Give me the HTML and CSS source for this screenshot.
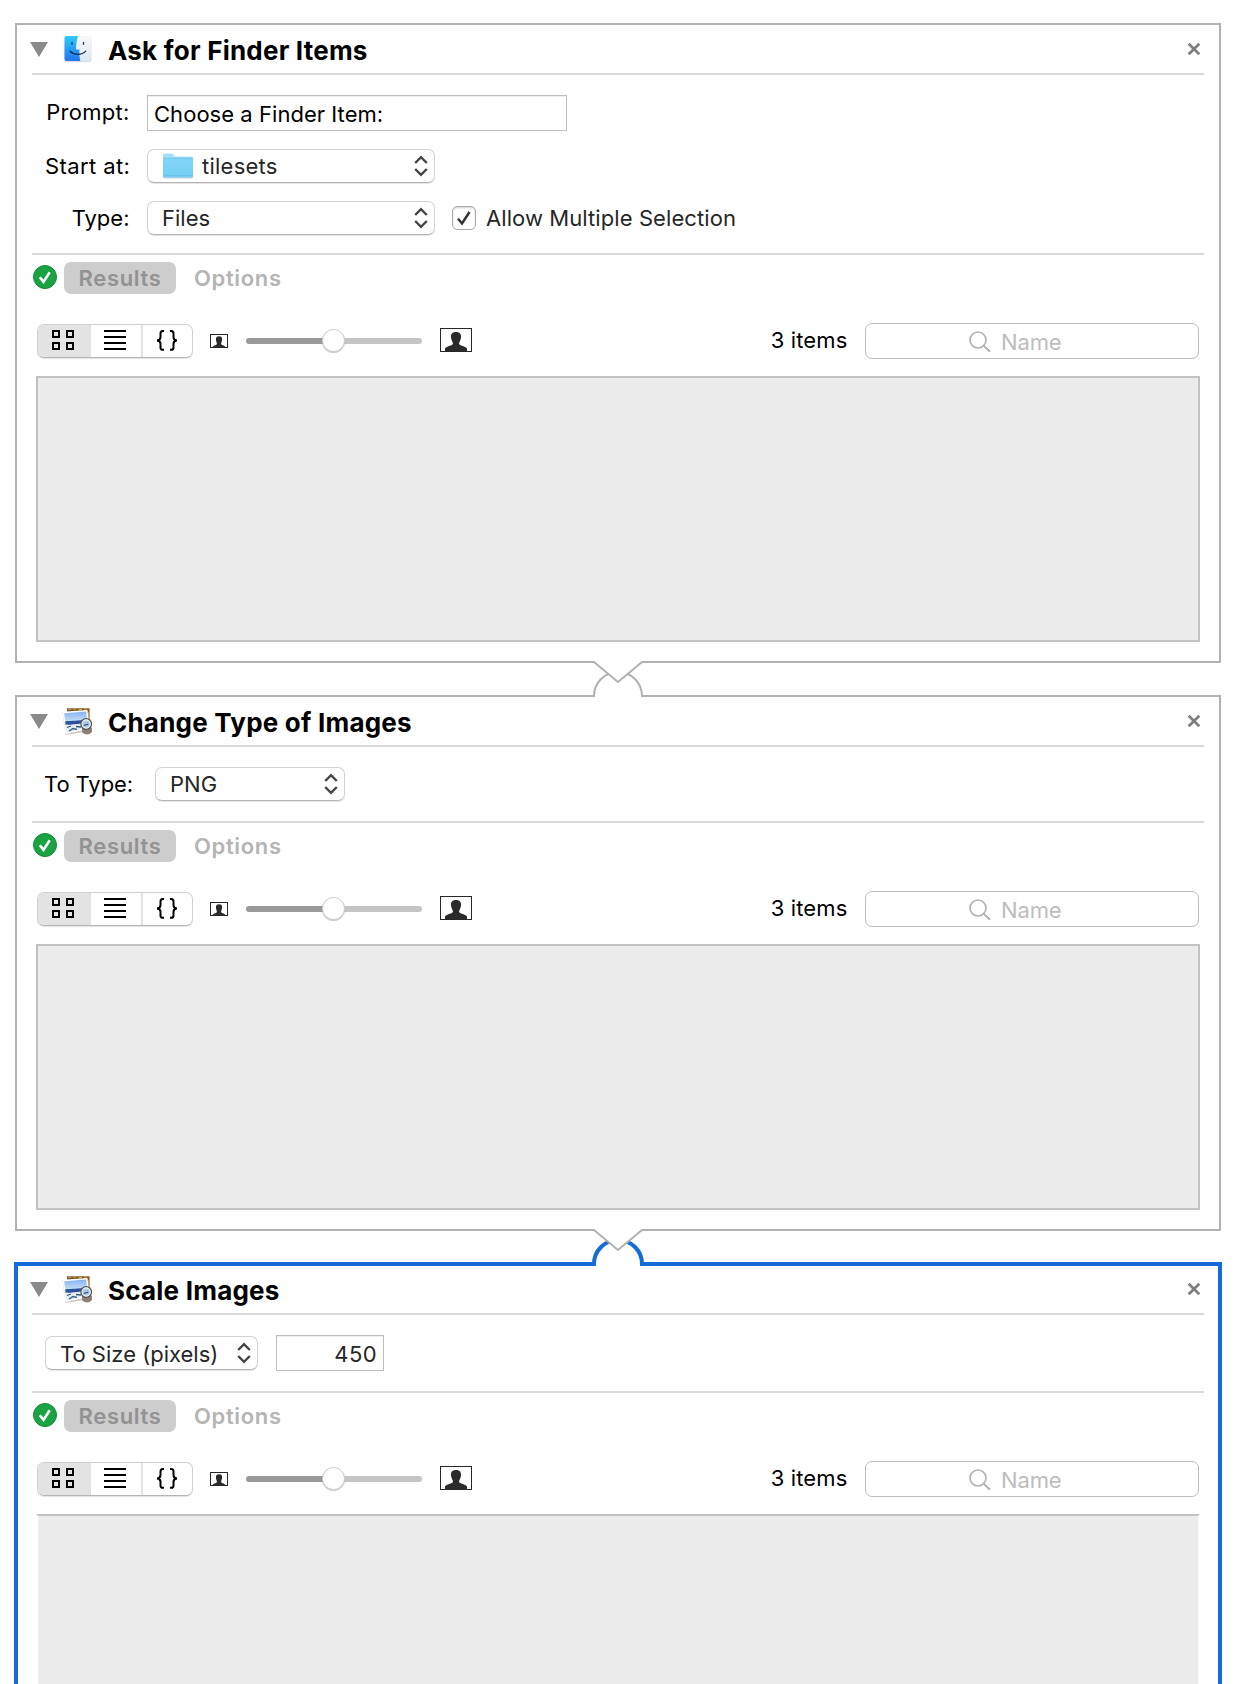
FILE: index.html
```
<!DOCTYPE html>
<html lang="en">
<head>
<meta charset="utf-8">
<title>Workflow</title>
<link rel="stylesheet" href="styles.css">
</head>
<body>
<svg class="defs" width="0" height="0" aria-hidden="true">
  <defs>
    <linearGradient id="blue" x1="0" y1="0" x2="0" y2="1"><stop offset="0" stop-color="#2bcbfb"/><stop offset="1" stop-color="#2374f0"/></linearGradient>
    <linearGradient id="pale" x1="0" y1="0" x2="0" y2="1"><stop offset="0" stop-color="#f8f8f9"/><stop offset="1" stop-color="#dce8f4"/></linearGradient>
    <linearGradient id="sky" x1="0" y1="0" x2="0" y2="1"><stop offset="0" stop-color="#86b4f0"/><stop offset=".5" stop-color="#c6dffa"/></linearGradient>
    <linearGradient id="fold" x1="0" y1="0" x2="0" y2="1"><stop offset="0" stop-color="#83d6f9"/><stop offset="1" stop-color="#74cdf3"/></linearGradient>
  </defs>
  <symbol id="finder" viewBox="-1 0 32 30">
    <rect x="1.500" y="2.800" width="27" height="25.500" rx="2" fill="#000" opacity=".13"/>
    <rect x="1.500" y="2" width="26.500" height="25" rx="2" fill="url(#pale)"/>
    <path d="M3.500 2H15c-1.400 4.500-2 8.500-2 13.500h3.400c-.1 4.500.1 8 .9 11.500H3.500a2 2 0 0 1-2-2V4a2 2 0 0 1 2-2z" fill="url(#blue)"/>
    <path d="M9 8v2.800M20.500 8v2.800" stroke="#16324d" stroke-width="1.200"/>
    <path d="M7 17.200c4.300 4.200 11.800 4.200 15.800 0" fill="none" stroke="#16324d" stroke-width="1.200" stroke-linecap="round"/>
  </symbol>
  <symbol id="preview" viewBox="0 0 32 30">
    <path d="M4 2h24.500v20H4z" fill="#000" opacity=".15"/>
    <path d="M4 1.200h24.500v20H4z" fill="#fbfbfb"/><path d="M5 2.300h22.500v17H5z" fill="#835625"/>
    <path d="M6 3.300h3M11 3h3M17 3.500h3M22 3h3M26.700 6v8" stroke="#caa25c" stroke-width="1"/>
    <path d="M.5 6l24.500-1 2.500 20-24 4z" fill="#555" opacity=".35"/>
    <path d="M.5 5.800L25.500 4l2 19-24 5z" fill="#fff"/>
    <path d="M2.200 7.200l22-1.800 1.700 16-21.200 4.800z" fill="url(#sky)"/>
    <path d="M3.200 15.300q9-.3 21.900-1.800l.5 3.500L3.800 19.500z" fill="#2b519c"/>
    <path d="M3.900 18.500q8 1 22-2.500v5.400L4.700 26.200z" fill="#e5edef"/>
    <path d="M5 21.500l4-1.500M7 25l4-2.500 4 .8M14 20.500l5 .5" fill="none" stroke="#315d86" stroke-width="1.300"/>
    <path d="M20 21.500h10v4c-1.500 3.800-8 4-10 .5z" fill="#8d8073"/>
    <circle cx="24.200" cy="18" r="5.200" fill="#a9c9e8" stroke="#55514e" stroke-width="1.500"/>
    <circle cx="24.200" cy="18" r="4.100" fill="none" stroke="#f4f4f4" stroke-width="1.100"/>
    <path d="M21.800 19.300l4.500-1.200" fill="none" stroke="#315b89" stroke-width="1.200"/>
  </symbol>
  <symbol id="person" viewBox="0 0 32 24">
    <rect x=".5" y=".5" width="31" height="23" fill="#fff" stroke="#262626"/>
    <path d="M5 23v-2.500c1-2 6-2.600 7.500-4 .8-1 .3-2-.5-3.500l-1-3c-.4-4 1.300-6 5-6s5.400 2 5 6l-1 3c-.8 1.500-1.300 2.500-.5 3.500 1.500 1.400 6.500 2 7.500 4V23z" fill="#2b2b2b"/>
  </symbol>
  <symbol id="person-small" viewBox="0 0 18 14">
    <rect x=".5" y=".5" width="17" height="13" fill="#fff" stroke="#262626"/>
    <path d="M2.500 13.500c0-2 3.500-2 4.500-3.500L6 6.500C5.500 3.500 6.500 2.300 9 2.300s3.500 1.200 3 4.200L11 10c1 1.500 4.500 1.500 4.500 3.500z" fill="#2b2b2b"/>
  </symbol>
  <symbol id="check" viewBox="0 0 24 24">
    <circle cx="12" cy="12" r="11.500" fill="#1aa342" stroke="#178a39"/>
    <path d="M6.800 12.300l3.700 4.600 6.200-9.600" fill="none" stroke="#fff" stroke-width="2.600"/>
  </symbol>
  <symbol id="arrows" viewBox="0 0 14 22"><path d="M1.200 8L7 2.200 12.800 8M1.200 14L7 19.800 12.800 14" fill="none" stroke="#444" stroke-width="2.400"/></symbol>
  <symbol id="close" viewBox="0 0 14 14"><path d="M1.700 1.700l10.600 10.600M12.300 1.700L1.700 12.300" stroke="#7d7d7d" stroke-width="2.700"/></symbol>
  <symbol id="tri" viewBox="0 0 18 15"><path d="M0 0h18L9 15z" fill="#8a8a8a"/></symbol>
  <symbol id="grid" viewBox="0 0 22 20"><path d="M1 1h6v6H1zM15 1h6v6h-6zM1 13h6v6H1zM15 13h6v6h-6z" fill="none" stroke="#000" stroke-width="2"/></symbol>
  <symbol id="lines" viewBox="0 0 22 20"><path d="M0 1h22M0 7h22M0 13h22M0 19h22" stroke="#000" stroke-width="2"/></symbol>
  <symbol id="braces" viewBox="0 0 22 21"><path d="M8 1H6.800Q4.500 1 4.500 3.500V7q0 3.200-3.500 3.400 3.500.2 3.500 3.400v3.600q0 2.400 2.300 2.400H8M14 1h1.200q2.300 0 2.300 2.500V7q0 3.200 3.500 3.400-3.500.2-3.500 3.400v3.600q0 2.400-2.300 2.400H14" fill="none" stroke="#000" stroke-width="2"/></symbol>
  <symbol id="search" viewBox="0 0 22 22"><circle cx="9" cy="9" r="8" fill="none" stroke="#b3b3b3" stroke-width="1.700"/><path d="M14.700 14.700l6.300 6" stroke="#b3b3b3" stroke-width="2"/></symbol>
</svg>

<main class="workflow">
  <section class="card">
    <header class="head">
      <svg class="tri"><use href="#tri"/></svg><svg class="app"><use href="#finder"/></svg>
      <h2>Ask for Finder Items</h2><svg class="close"><use href="#close"/></svg>
    </header>
    <div class="form form-grid">
      <label class="prompt">Prompt:</label><div class="field wide">Choose a Finder Item:</div>
      <label class="start">Start at:</label>
      <div class="popup w288"><svg class="folder" viewBox="0 0 32 26"><path d="M1 3q0-2 2-2h7l2.500 3H29q2 0 2 2v18q0 1.500-1.500 1.500h-27Q1 25.500 1 24z" fill="#a8a8a8" opacity=".5"/><path d="M1 2.500Q1 .5 3 .5h7l2.500 3H29q2 0 2 2V8H1z" fill="#a3def9"/><path d="M1 5h30v18.500q0 1-1 1H2q-1 0-1-1z" fill="url(#fold)"/><path d="M1 5.300h30M1 22.500h30" stroke="#63bde6" stroke-width=".7"/></svg><span class="folder-name">tilesets</span><svg class="arrows"><use href="#arrows"/></svg></div>
      <label class="type">Type:</label>
      <div class="line"><div class="popup w288"><span>Files</span><svg class="arrows"><use href="#arrows"/></svg></div>
        <span class="checkbox"><svg viewBox="0 0 16 16"><path d="M2 8.700l4 4.800L13.500 2" fill="none" stroke="#333" stroke-width="2.500"/></svg></span><span class="allow">Allow Multiple Selection</span></div>
    </div>
    <div class="tabs"><svg class="ok"><use href="#check"/></svg><span class="tab on">Results</span><span class="tab">Options</span></div>
    <div class="tools">
      <div class="segments"><span class="seg on"><svg><use href="#grid"/></svg></span><span class="seg"><svg><use href="#lines"/></svg></span><span class="seg last"><svg class="br"><use href="#braces"/></svg></span></div>
      <svg class="small"><use href="#person-small"/></svg><div class="slider"><i class="knob"></i></div><svg class="large"><use href="#person"/></svg>
      <span class="count">3 items</span><div class="search"><svg><use href="#search"/></svg><span>Name</span></div>
    </div>
    <div class="results"></div>
  </section>

  <div class="joint"><svg viewBox="0 0 56 40"><path d="M4 1h48v4H4zM4 34h48v6H4z" fill="#fff"/><path class="arc" d="M4 38v-1a24 24 0 0 1 48 0v1"/><path class="tip" d="M3 3h1l24 20L52 3h1"/></svg></div>

  <section class="card">
    <header class="head">
      <svg class="tri"><use href="#tri"/></svg><svg class="app"><use href="#preview"/></svg>
      <h2>Change Type of Images</h2><svg class="close"><use href="#close"/></svg>
    </header>
    <div class="form line"><label class="totype">To Type:</label><div class="popup w190"><span>PNG</span><svg class="arrows"><use href="#arrows"/></svg></div></div>
    <div class="tabs"><svg class="ok"><use href="#check"/></svg><span class="tab on">Results</span><span class="tab">Options</span></div>
    <div class="tools">
      <div class="segments"><span class="seg on"><svg><use href="#grid"/></svg></span><span class="seg"><svg><use href="#lines"/></svg></span><span class="seg last"><svg class="br"><use href="#braces"/></svg></span></div>
      <svg class="small"><use href="#person-small"/></svg><div class="slider"><i class="knob"></i></div><svg class="large"><use href="#person"/></svg>
      <span class="count">3 items</span><div class="search"><svg><use href="#search"/></svg><span>Name</span></div>
    </div>
    <div class="results"></div>
  </section>

  <div class="joint active"><svg viewBox="0 0 56 40"><path d="M4 1h48v4H4zM4 34h48v6H4z" fill="#fff"/><path class="arc" d="M4 39v-2a24 24 0 0 1 48 0v2"/><path class="tip" d="M3 3h1l24 20L52 3h1"/></svg></div>

  <section class="card selected">
    <header class="head">
      <svg class="tri"><use href="#tri"/></svg><svg class="app"><use href="#preview"/></svg>
      <h2>Scale Images</h2><svg class="close"><use href="#close"/></svg>
    </header>
    <div class="form line"><div class="popup w213"><span>To Size (pixels)</span><svg class="arrows"><use href="#arrows"/></svg></div><div class="field num">450</div></div>
    <div class="tabs"><svg class="ok"><use href="#check"/></svg><span class="tab on">Results</span><span class="tab">Options</span></div>
    <div class="tools">
      <div class="segments"><span class="seg on"><svg><use href="#grid"/></svg></span><span class="seg"><svg><use href="#lines"/></svg></span><span class="seg last"><svg class="br"><use href="#braces"/></svg></span></div>
      <svg class="small"><use href="#person-small"/></svg><div class="slider"><i class="knob"></i></div><svg class="large"><use href="#person"/></svg>
      <span class="count">3 items</span><div class="search"><svg><use href="#search"/></svg><span>Name</span></div>
    </div>
    <div class="results open"></div>
  </section>
</main>
</body>
</html>
```

FILE: styles.css
```
* { box-sizing: border-box; }
body { margin: 0; background: #fff; color: #000; font: 22px/26px Inter, "Liberation Sans", sans-serif; }
svg { display: block; flex: none; }
.defs { position: absolute; }
.workflow { height: 1684px; overflow: hidden; padding: 23px 15px 0; }
.card { border: 2px solid #b1b1b1; background: #fff; padding: 0 15px; white-space: nowrap; }

.head { height: 50px; border-bottom: 2px solid #d9d9d9; display: flex; align-items: center; }
.tri { width: 18px; height: 15px; margin: 0 14px 0 -2px; }
.app { width: 32px; height: 30px; }
.head h2 { margin: 3px auto 0 14px; font-size: 26px; line-height: 30px; font-weight: 700; letter-spacing: .22px; }
.close { width: 14px; height: 14px; margin-right: 3px; }

.form { padding: 20px 13px; border-bottom: 2px solid #d9d9d9; }
.form-grid { padding-bottom: 18px; display: grid; grid-template-columns: 84.5px 1fr; column-gap: 17.5px; row-gap: 18px; align-items: center; }
.form-grid label { text-align: right; }
.prompt { margin-top: -2px; letter-spacing: .25px; }
.start { letter-spacing: .4px; }
.line { display: flex; align-items: center; }
.field { height: 36px; border: 1px solid #bdbdbd; box-shadow: inset 0 1px #f0f0f0; padding: 1px 6px 0; display: flex; align-items: center; letter-spacing: .04px; }
.wide { width: 420px; }
.num { width: 108px; margin-left: 18px; padding: 2px 6px 0; justify-content: flex-end; color: #262626; letter-spacing: .4px; }
.popup { height: 34px; border: 1px solid #d2d2d2; border-bottom-color: #b5b5b5; border-radius: 7px; box-shadow: 0 1px 1px #0000001c; padding: 0 6.5px 0 14px; display: flex; align-items: center; color: #262626; }
.w288 { width: 288px; }
.w190 { width: 190px; margin-left: 22px; }
.w213 { width: 213px; }
.w213 span { margin-top: 1px; }
.folder { width: 32px; height: 26px; margin-right: 8px; }
.folder-name { letter-spacing: .25px; }
.arrows { width: 14px; height: 22px; margin-left: auto; }
.checkbox { width: 24px; height: 24px; margin: 0 10px 0 17px; border: 1px solid #adadad; border-radius: 5px; box-shadow: inset 0 1px 2px #0003; display: grid; place-items: center; }
.checkbox svg { width: 16px; height: 16px; }
.allow { color: #262626; letter-spacing: .08px; }
.totype { margin-left: -1px; letter-spacing: -.08px; }

.tabs { height: 39px; padding: 7px 1px 0; display: flex; align-items: center; color: #b4b4b4; font-weight: 600; letter-spacing: .65px; }
.ok { width: 24px; height: 24px; margin: -2px 7px 0 0; }
.tab.on { width: 112px; height: 32px; border-radius: 7px; background: #cdcdcd; color: #929292; display: grid; place-items: center; margin-right: 18px; }

.tools { height: 36px; margin: 29px 5px 17px; display: flex; align-items: center; }
.segments { width: 156px; height: 34px; border: 1px solid #d0d0d0; border-bottom-color: #b5b5b5; border-radius: 7px; box-shadow: 0 1px 1px #0000001c; display: flex; overflow: hidden; }
.seg { flex: none; width: 50px; height: 30px; padding-right: 2px; display: grid; place-items: center; }
.seg.on { width: 53px; height: 32px; padding: 0 3px 2px 0; background: #e3e3e3; }
.seg.last { width: 51px; height: 32px; padding: 0 1px 2px 0; border-left: 2px solid #e3e3e3; }
.seg svg { width: 22px; height: 20px; }
.seg .br { height: 21px; }
.small { width: 18px; height: 14px; margin: 0 18px 0 17px; }
.slider { width: 176px; height: 6px; border-radius: 3px; background: linear-gradient(90deg, #999 50%, #c5c5c5 50%); display: flex; align-items: center; justify-content: center; }
.knob { flex: none; width: 23px; height: 23px; margin: -1px 1px 0 0; border-radius: 50%; background: #fff; border: 1px solid #ccc; box-shadow: 0 1px 1px #0003; }
.large { width: 32px; height: 24px; margin: -2px 0 0 18px; }
.count { margin: -2px 17.5px 0 auto; letter-spacing: .15px; }
.search { width: 334px; height: 36px; border: 1px solid #bdbdbd; border-radius: 7px; display: flex; align-items: center; padding: 2px 0 0 102.5px; color: #bdbdbd; letter-spacing: -.15px; }
.search svg { width: 22px; height: 22px; margin-right: 10.5px; }
.results { height: 266px; margin: 0 4px 19px; border: 2px solid #c2c2c2; background: #ececec; }

.joint { height: 32px; display: flex; justify-content: center; }
.joint svg { position: relative; width: 56px; height: 40px; margin: -4px 0; }
.arc, .tip { stroke: #b1b1b1; stroke-width: 2; fill: #fff; }
.active { height: 31px; }
.active .arc { stroke: #136cd8; stroke-width: 4; }
.selected { margin: 0 -1px; height: 430px; border: 4px solid #136cd8; padding: 0 14px; }
.selected .head { height: 49px; padding-bottom: 1px; }
.open { height: 300px; border-color: #c2c2c2 #fff; }
```
